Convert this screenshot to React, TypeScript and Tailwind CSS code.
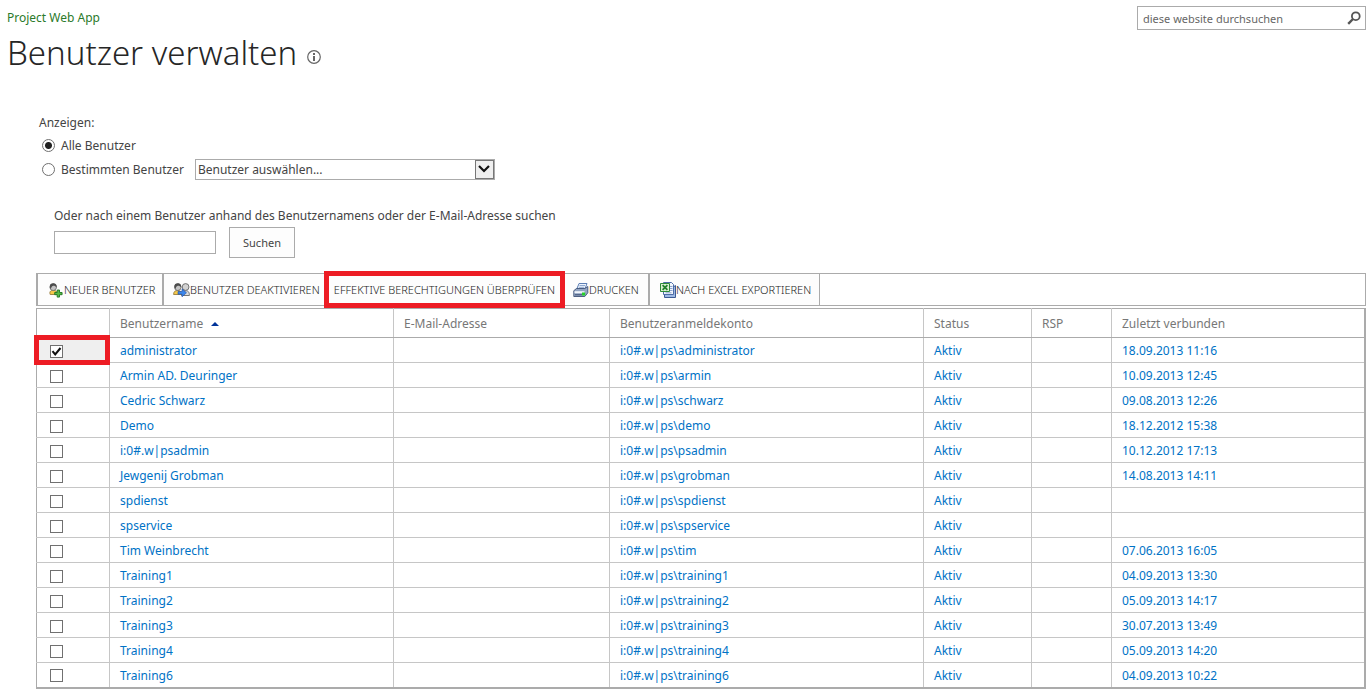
import { useState } from 'react';

type User = { name: string; account: string; last: string };

const users: User[] = [
  { name: 'administrator', account: 'administrator', last: '18.09.2013 11:16' },
  { name: 'Armin AD. Deuringer', account: 'armin', last: '10.09.2013 12:45' },
  { name: 'Cedric Schwarz', account: 'schwarz', last: '09.08.2013 12:26' },
  { name: 'Demo', account: 'demo', last: '18.12.2012 15:38' },
  { name: 'i:0#.w|psadmin', account: 'psadmin', last: '10.12.2012 17:13' },
  { name: 'Jewgenij Grobman', account: 'grobman', last: '14.08.2013 14:11' },
  { name: 'spdienst', account: 'spdienst', last: '' },
  { name: 'spservice', account: 'spservice', last: '' },
  { name: 'Tim Weinbrecht', account: 'tim', last: '07.06.2013 16:05' },
  { name: 'Training1', account: 'training1', last: '04.09.2013 13:30' },
  { name: 'Training2', account: 'training2', last: '05.09.2013 14:17' },
  { name: 'Training3', account: 'training3', last: '30.07.2013 13:49' },
  { name: 'Training4', account: 'training4', last: '05.09.2013 14:20' },
  { name: 'Training6', account: 'training6', last: '04.09.2013 10:22' },
];

const NewUserIcon = () => (
  <svg className="shrink-0" width="16" height="16" viewBox="0 0 16 16" aria-hidden="true">
    <path d="M2.200 12.500c-1-2.500.3-4.200 3-4.200 2.600 0 4.200 1.300 4.200 4.200z" fill="#f6c94a" stroke="#8a7030" strokeWidth=".8" />
    <circle cx="5.200" cy="5.200" r="3.300" fill="#c4c4c4" stroke="#666" strokeWidth=".8" />
    <path d="M1.800 5C1.600 2.200 3.200 1.300 5.200 1.300S9 2.300 8.600 5.500C7.800 4.200 6.800 3.700 5.200 3.700c-1.600 0-1.800 2.400-2.600 3.300z" fill="#4c4c4c" />
    <path d="M9.200 8h2.300v2.500h2.600v2.200h-2.600v2.400H9.200v-2.400H6.700v-2.200h2.500z" fill="#56b947" stroke="#1f7420" strokeWidth=".9" />
  </svg>
);

const DeactivateIcon = () => (
  <svg className="shrink-0" width="17" height="16" viewBox="0 0 17 16" aria-hidden="true">
    <path d="M8.500 13.500c0-3.600 1.300-4.800 4-4.800s3.900 1.200 3.900 4.800z" fill="#dcdcdc" stroke="#666" strokeWidth=".9" />
    <circle cx="12.600" cy="5" r="3.400" fill="#d2d2d2" stroke="#666" strokeWidth=".9" />
    <path d="M.6 12.500c0-2.700 1.300-4 4-4s4.200 1.300 4.200 4z" fill="#f6c94a" stroke="#8a7030" strokeWidth=".8" />
    <circle cx="4.800" cy="5.200" r="3.300" fill="#c4c4c4" stroke="#666" strokeWidth=".8" />
    <path d="M1.400 5c-.2-2.800 1.400-3.700 3.400-3.700S8.600 2.300 8.200 5.500C7.400 4.200 6.400 3.700 4.800 3.700 3.200 3.700 3 6.100 2.200 7z" fill="#4c4c4c" />
    <path d="M5 9.500h4V6.800l4.500 4-4.500 4v-2.600H5z" fill="#3c86ea" stroke="#1d4aa0" strokeWidth=".6" />
  </svg>
);

const PrinterIcon = () => (
  <svg className="shrink-0" width="16" height="16" viewBox="0 0 16 16" aria-hidden="true">
    <path d="M6 1.500h8L12 7H3.800z" fill="#eef4fd" stroke="#5d7fb4" />
    <path d="M6.500 3.500h5.500M5.800 5.300h5.500" stroke="#8fa9cf" />
    <path d="M.8 8.700L3.500 6.500h8.300L14.800 4.500v6.300l-3 3.700H.8z" fill="#93a5c2" stroke="#3f5277" strokeWidth=".9" />
    <path d="M1.500 9.200h10v2h-10z" fill="#f1f5fb" />
    <path d="M2 12.800h7" stroke="#3c4f74" />
    <path d="M9 10.500h3.200v3H9z" fill="#25d02a" />
  </svg>
);

const ExcelIcon = () => (
  <svg className="shrink-0" width="16" height="16" viewBox="0 0 16 16" aria-hidden="true">
    <path d="M4.500 5.500h8l3-2v12h-11z" fill="#9db8e4" stroke="#3c5a94" />
    <path d="M3.500.5h8l2 2v10h-10z" fill="#f2f6fd" stroke="#4d6da8" />
    <path d="M10 4.500h2.500M10 6.500h2.500M10 8.500h2.500M5.500 10.800h6" stroke="#8aa4d0" />
    <path d="M.5 1.500h9v8h-9z" fill="#d9efd2" stroke="#2d8a36" />
    <path d="M2.600 3.200l4.800 4.600M7.400 3.200L2.600 7.800" stroke="#22802b" strokeWidth="1.800" />
  </svg>
);

const Check = () => (
  <svg
    className="pointer-events-none absolute inset-0 hidden peer-checked:block"
    width="13"
    height="13"
    viewBox="0 0 13 13"
    aria-hidden="true"
  >
    <path d="M2.500 6.200L5.200 9.500 10.500 3" fill="none" stroke="#111" strokeWidth="2" />
  </svg>
);

const radio =
  'size-[13px] shrink-0 appearance-none rounded-full border border-[#707070] bg-white checked:bg-[radial-gradient(circle,#222_3px,#fff_4px)]';
const toolText = 'text-[11px] font-light text-[#222] uppercase whitespace-nowrap';
const tool = 'flex h-full items-center border-[#ababab] bg-[#fdfdfd]';
const cell = 'border border-[#c6c6c6] px-[10px] pt-[2px] pb-0 text-left font-normal';
const head = `${cell} border-y-[#ababab] first:border-l-[#ababab]`;
const link = 'text-[#0072c6] hover:underline';

const App = () => {
  const [mode, setMode] = useState('all');
  const [selected, setSelected] = useState<string[]>(['administrator']);

  const toggle = (name: string) =>
    setSelected((prev) => (prev.includes(name) ? prev.filter((n) => n !== name) : [...prev, name]));

  return (
    <div className="bg-white font-['Noto_Sans',sans-serif] text-[12px] leading-5 text-[#444]">
      <header className="flex items-start justify-between pl-[7px]">
        <div className="pt-2">
          <a href="#" className="block text-[#2b7a2b]">Project Web App</a>
          <div className="flex items-center gap-[10px]">
            <h1 className="text-[33px] leading-[50px] font-light text-[#262626]">Benutzer verwalten</h1>
            <button type="button" aria-label="Info" className="mt-2">
              <svg width="14" height="14" viewBox="0 0 14 14" aria-hidden="true">
                <circle cx="7" cy="7" r="6.300" fill="none" stroke="#666" strokeWidth="1.200" />
                <path d="M6 3h2v2H6zM6 6h2v5H6z" fill="#666" />
              </svg>
            </button>
          </div>
        </div>
        <form className="mt-[6px] mr-px flex h-6 w-[229px] items-center border border-[#ababab]">
          <input
            type="text"
            aria-label="Suche"
            placeholder="diese website durchsuchen"
            className="min-w-0 flex-1 pt-[2px] pl-[5px] text-[11px] outline-none placeholder:text-[#666]"
          />
          <button type="button" aria-label="Suchen" className="mr-1">
            <svg width="14" height="14" viewBox="0 0 14 14" fill="none" stroke="#555" aria-hidden="true">
              <circle cx="8.800" cy="5.200" r="3.900" strokeWidth="1.800" />
              <path d="M6 8L1.200 12.800" strokeWidth="2.400" />
            </svg>
          </button>
        </form>
      </header>

      <main className="mr-px ml-9 pt-[35px]">
        <fieldset className="pl-[3px]">
          <legend>Anzeigen:</legend>
          <div className="flex h-6 items-center gap-[6px] pl-[3px]">
            <input type="radio" id="all" name="mode" checked={mode === 'all'} onChange={() => setMode('all')} className={radio} />
            <label htmlFor="all" className="pt-[2px]">Alle Benutzer</label>
          </div>
          <div className="flex h-6 items-center gap-[6px] pl-[3px]">
            <input type="radio" id="one" name="mode" checked={mode === 'one'} onChange={() => setMode('one')} className={radio} />
            <label htmlFor="one" className="pt-[2px]">Bestimmten Benutzer</label>
            <div className="relative ml-[5px]">
              <select
                aria-label="Benutzer"
                className="block h-[21px] w-[300px] appearance-none border border-[#ababab] bg-white pt-px pl-[2px] leading-[18px]"
              >
                <option>Benutzer auswählen...</option>
              </select>
              <span className="pointer-events-none absolute inset-y-px right-px flex w-[19px] items-center justify-center border border-[#777] bg-[#efefef]">
                <svg width="12" height="8" viewBox="0 0 12 8" aria-hidden="true">
                  <path d="M1 1l5 5 5-5" fill="none" stroke="#111" strokeWidth="2.200" />
                </svg>
              </span>
            </div>
          </div>
        </fieldset>

        <form className="pt-[25px] pl-[18px]">
          <label htmlFor="query" className="block">
            Oder nach einem Benutzer anhand des Benutzernamens oder der E-Mail-Adresse suchen
          </label>
          <div className="mt-px flex items-center gap-[13px]">
            <input id="query" type="text" className="h-[23px] w-[162px] border border-[#ababab] px-1" />
            <button type="button" className="h-[31px] w-[66px] border border-[#ababab] bg-[#fdfdfd] text-[11px]">
              Suchen
            </button>
          </div>
        </form>

        <div className="mt-[15px] flex h-[33px] items-center border border-[#ababab]">
          <button type="button" className={`${tool} ${toolText} w-[126px] border-x pl-[10px]`}>
            <NewUserIcon />
            Neuer Benutzer
          </button>
          <button type="button" className={`${tool} ${toolText} w-[161px] border-l pl-[9px]`}>
            <DeactivateIcon />
            Benutzer deaktivieren
          </button>
          <button
            type="button"
            className={`${toolText} relative z-10 -my-[3px] flex h-[37px] w-[241px] items-center justify-center border-[5px] border-[#ed1c24] bg-[#fdfdfd]`}
          >
            Effektive Berechtigungen überprüfen
          </button>
          <button type="button" className={`${tool} ${toolText} w-[84px] border-r pl-2`}>
            <PrinterIcon />
            Drucken
          </button>
          <button type="button" className={`${tool} ${toolText} w-[171px] border-x pl-[10px]`}>
            <ExcelIcon />
            Nach Excel exportieren
          </button>
        </div>

        <table className="mt-[2px] w-full table-fixed border-collapse border-r-2 border-b-2 border-[#ababab]">
          <colgroup>
            <col className="w-[73px]" />
            <col className="w-[284px]" />
            <col className="w-[216px]" />
            <col className="w-[314px]" />
            <col className="w-[108px]" />
            <col className="w-[80px]" />
            <col />
          </colgroup>
          <thead className="text-[#777]">
            <tr className="h-[29px]">
              <th className={head} aria-label="Auswahl" />
              <th className={head}>
                <span className="flex items-center gap-2">
                  Benutzername
                  <svg width="8" height="4" viewBox="0 0 8 4" aria-hidden="true">
                    <path d="M4 0l4 4H0z" fill="#003399" />
                  </svg>
                </span>
              </th>
              <th className={head}>E-Mail-Adresse</th>
              <th className={head}>Benutzeranmeldekonto</th>
              <th className={head}>Status</th>
              <th className={head}>RSP</th>
              <th className={head}>Zuletzt verbunden</th>
            </tr>
          </thead>
          <tbody>
            {users.map((u, i) => (
              <tr key={u.name} className="h-[25px]">
                <td className={`${cell} relative border-l-[#ababab] ${i === 0 ? 'bg-[#efefef]' : ''}`}>
                  <span className="relative ml-[3px] block size-[13px]">
                    <input
                      type="checkbox"
                      aria-label={u.name}
                      checked={selected.includes(u.name)}
                      onChange={() => toggle(u.name)}
                      className="peer block size-[13px] appearance-none border border-[#707070] bg-white"
                    />
                    <Check />
                  </span>
                  {i === 0 && (
                    <span className="pointer-events-none absolute -inset-y-[3px] -right-px -left-[3px] border-[5px] border-[#ed1c24]" />
                  )}
                </td>
                <td className={cell}><a href="#" className={link}>{u.name}</a></td>
                <td className={cell} />
                <td className={cell}><a href="#" className={link}>{`i:0#.w|ps\\${u.account}`}</a></td>
                <td className={cell}><a href="#" className={link}>Aktiv</a></td>
                <td className={cell} />
                <td className={cell}>{u.last && <a href="#" className={link}>{u.last}</a>}</td>
              </tr>
            ))}
          </tbody>
        </table>
      </main>
    </div>
  );
};

export default App;
